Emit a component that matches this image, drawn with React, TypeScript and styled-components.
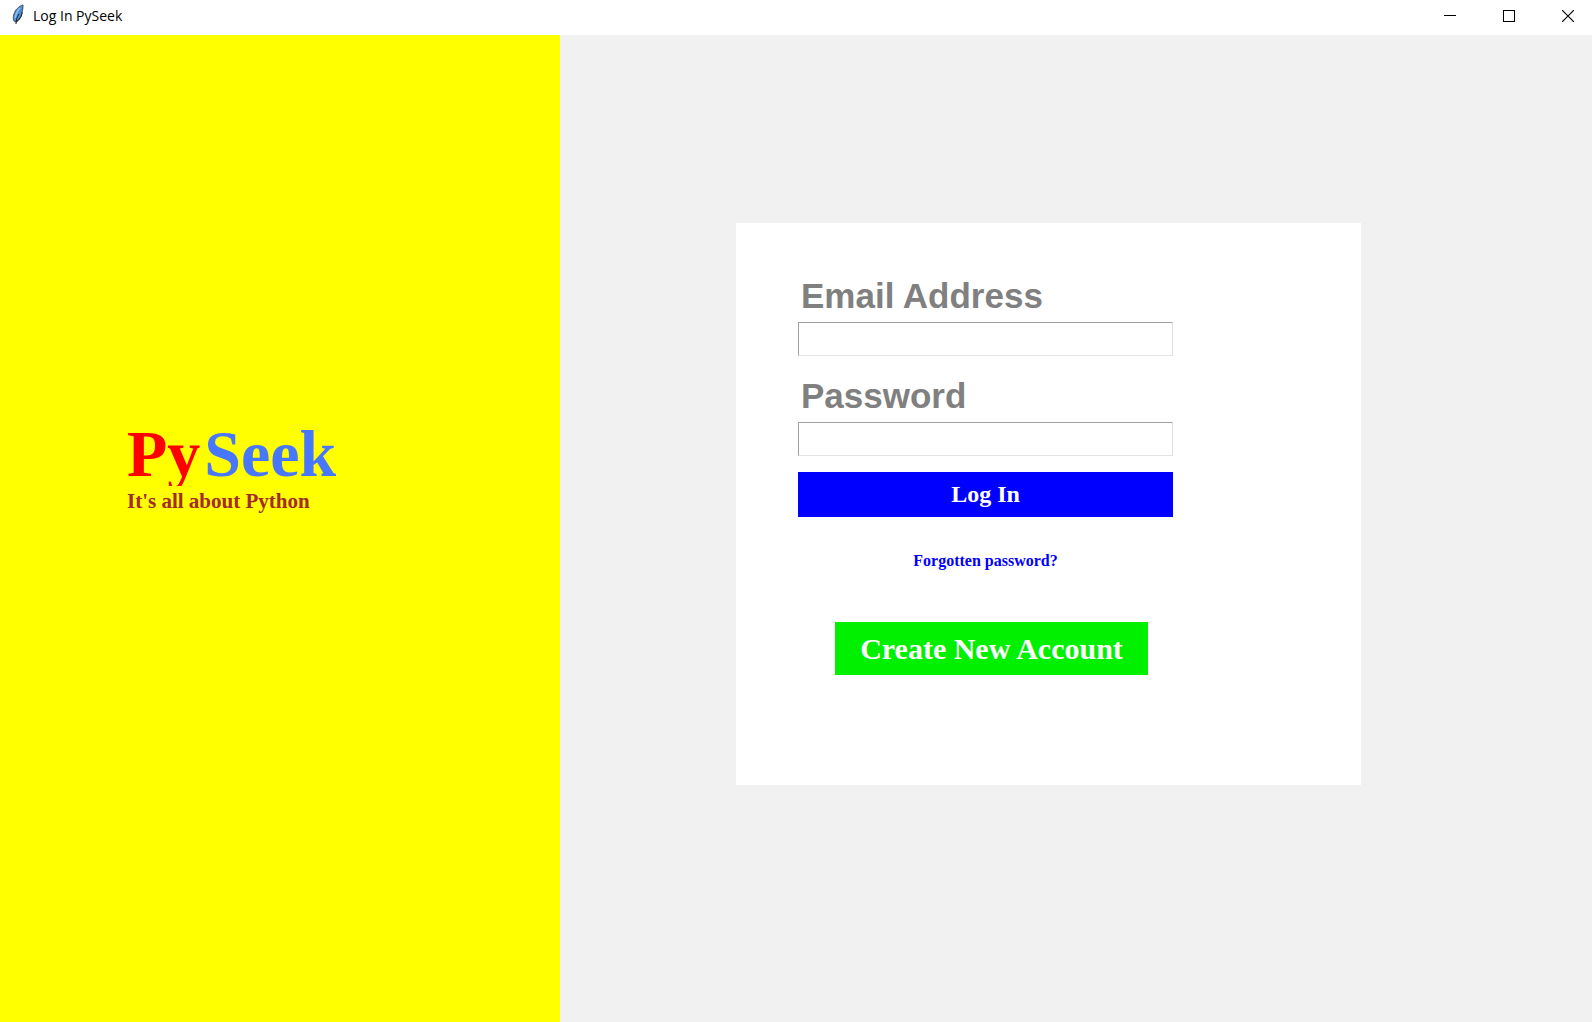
import React from "react";
import styled, { createGlobalStyle } from "styled-components";

const GlobalStyle = createGlobalStyle`
  *, *::before, *::after { box-sizing: border-box; }
  body {
    margin: 0;
    background: #f1f1f1;
    font-family: "Liberation Serif", "Times New Roman", serif;
  }
`;

const Window = styled.div`
  display: flex;
  flex-direction: column;
  min-height: 100vh;
`;

const TitleBar = styled.header`
  display: flex;
  align-items: flex-start;
  height: 35px;
  padding-left: 11px;
  background: #ffffff;
`;

const FeatherIcon = styled.svg`
  width: 14px;
  height: 22px;
  margin-top: 4px;
`;

const Title = styled.h1`
  flex: 1;
  margin: 0;
  padding-left: 8px;
  font: 400 14px/32px "Open Sans", "Noto Sans", sans-serif;
  color: #000000;
`;

const WindowControls = styled.div`
  display: flex;
  gap: 11px;
`;

const ControlButton = styled.button`
  display: flex;
  align-items: center;
  justify-content: center;
  width: 48px;
  height: 32px;
  padding: 0;
  border: 0;
  background: transparent;
  color: #000000;
`;

const Body = styled.main`
  display: flex;
  flex: 1;
`;

const Sidebar = styled.aside`
  flex: 0 0 560px;
  padding: 386px 20px 20px 127px;
  background: #ffff00;
`;

const Brand = styled.div`
  display: flex;
  gap: 4px;
  margin-bottom: 3px;
  font-size: 66px;
  font-weight: 700;
  line-height: 65px;
`;

const BrandPart = styled.span<{ $color: string }>`
  overflow: hidden;
  color: ${(p) => p.$color};
`;

const Tagline = styled.p`
  margin: 0;
  font-size: 21px;
  font-weight: 700;
  line-height: 24px;
  color: #a52a2a;
`;

const Content = styled.section`
  flex: 1;
  padding: 188px 231px 188px 176px;
`;

const Card = styled.div`
  min-height: 562px;
  padding: 49px 62px;
  background: #ffffff;
`;

const Form = styled.form`
  display: flex;
  flex-direction: column;
  max-width: 375px;
`;

const Field = styled.div`
  display: flex;
  flex-direction: column;
  gap: 2px;
  margin-bottom: 16px;
`;

const Label = styled.label`
  padding-left: 3px;
  font: 700 35px/48px "Liberation Sans", Arial, sans-serif;
  color: #808080;
`;

const Input = styled.input`
  width: 100%;
  height: 34px;
  padding: 0 6px;
  border: 1px solid;
  border-color: #a0a0a0 #e3e3e3 #e3e3e3 #a0a0a0;
  border-radius: 0;
  background: #ffffff;
  font: 400 20px "Liberation Serif", "Times New Roman", serif;
`;

const ActionButton = styled.button`
  padding: 0;
  border: 0;
  color: #ffffff;
  font-family: inherit;
  font-weight: 700;
`;

const LoginButton = styled(ActionButton)`
  height: 45px;
  background: #0000ff;
  font-size: 24px;
`;

const ForgotLink = styled.a`
  align-self: center;
  margin: 34px 0 51px;
  font-size: 16px;
  font-weight: 700;
  line-height: 20px;
  color: #0000ff;
  text-decoration: none;
`;

const CreateButton = styled(ActionButton)`
  height: 53px;
  margin: 0 25px 0 37px;
  background: #00f000;
  font-size: 30px;
`;

export default function App() {
  return (
    <>
      <GlobalStyle />
      <Window>
        <TitleBar>
          <FeatherIcon viewBox="0 0 14 22" aria-hidden="true">
            <path
              d="M12 1 C8 2 4 6 3 10 C2 13 2 15 3 17 L5 18 C9 16 11 12 11 8 C12 5 12 3 12 1 Z"
              fill="#4d8fd6"
              stroke="#4a5058"
            />
            <path d="M9 4 C6 7 5 10 4 14" fill="none" stroke="#8fc0f0" strokeWidth="1.5" />
            <path d="M11 8 C11 12 8 16 5 18" fill="none" stroke="#1f2226" />
            <path d="M8 10 C6 13 5 16 5 20" fill="none" stroke="#1f2226" />
          </FeatherIcon>
          <Title>Log In PySeek</Title>
          <WindowControls>
            <ControlButton type="button" aria-label="Minimize">
              <svg width="12" height="12" viewBox="0 0 12 12">
                <path d="M0 5.5H12" stroke="currentColor" />
              </svg>
            </ControlButton>
            <ControlButton type="button" aria-label="Maximize">
              <svg width="12" height="12" viewBox="0 0 12 12">
                <rect x="0.5" y="0.5" width="11" height="11" fill="none" stroke="currentColor" />
              </svg>
            </ControlButton>
            <ControlButton type="button" aria-label="Close">
              <svg width="12" height="12" viewBox="0 0 12 12">
                <path d="M0 0L12 12M12 0L0 12" stroke="currentColor" strokeWidth="1.2" />
              </svg>
            </ControlButton>
          </WindowControls>
        </TitleBar>
        <Body>
          <Sidebar>
            <Brand>
              <BrandPart $color="#ff0000">Py</BrandPart>
              <BrandPart $color="#4877ff">Seek</BrandPart>
            </Brand>
            <Tagline>It's all about Python</Tagline>
          </Sidebar>
          <Content>
            <Card>
              <Form onSubmit={(e) => e.preventDefault()}>
                <Field>
                  <Label htmlFor="email">Email Address</Label>
                  <Input id="email" type="email" />
                </Field>
                <Field>
                  <Label htmlFor="password">Password</Label>
                  <Input id="password" type="password" />
                </Field>
                <LoginButton type="submit">Log In</LoginButton>
                <ForgotLink href="#forgot">Forgotten password?</ForgotLink>
                <CreateButton type="button">Create New Account</CreateButton>
              </Form>
            </Card>
          </Content>
        </Body>
      </Window>
    </>
  );
}
